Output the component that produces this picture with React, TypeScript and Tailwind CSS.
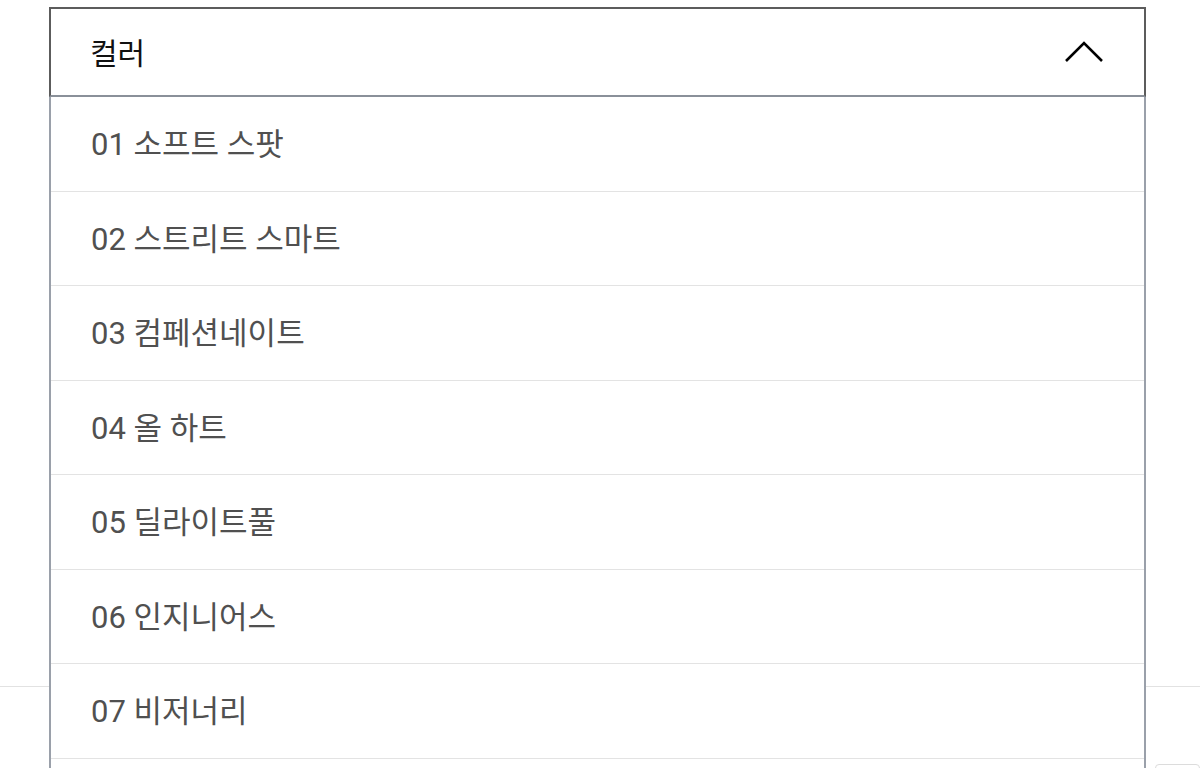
import { useState } from "react";

const colors = [
  "01 소프트 스팟",
  "02 스트리트 스마트",
  "03 컴페션네이트",
  "04 올 하트",
  "05 딜라이트풀",
  "06 인지니어스",
  "07 비저너리",
];

const font = { fontFamily: "Roboto, 'Noto Sans CJK KR', sans-serif" };

export default function App() {
  const [open, setOpen] = useState(true);

  return (
    <div className="relative h-[768px] w-[1200px] overflow-hidden bg-white" style={font}>
      {/* page content under the dropdown */}
      <div className="h-[687px] border-b border-[#e2e2e2]" />
      <div className="flex justify-end pt-[77px]">
        <div className="h-[20px] w-[45px] rounded-sm border border-[#dcdcdc]" />
      </div>

      <div className="absolute left-[49px] top-[7px] w-[1097px]">
        <button
          type="button"
          onClick={() => setOpen(!open)}
          className="flex h-[90px] w-full items-center justify-between border-2 border-[#5c5c5c] border-b-[#8a9099] bg-white pt-[2px] pl-[39px] pr-[40px] text-left"
        >
          <span className="text-[30px] text-[#111]">컬러</span>
          <svg width="40" height="24" viewBox="0 0 40 24" fill="none" className={open ? "-mt-[2px]" : "-mt-[2px] rotate-180"}>
            <polyline points="2,21 20,3 38,21" stroke="#000" strokeWidth="2.6" />
          </svg>
        </button>
        {open ? (
          <ul className="border-x-2 border-[#9aa0aa] bg-white pb-[40px]">
            {colors.map((c) => (
              <li
                key={c}
                className="flex h-[94.5px] items-center border-b border-[#e3e3e3] pt-[3px] pl-[40px] text-[31px] text-[#505050]"
              >
                {c}
              </li>
            ))}
          </ul>
        ) : null}
      </div>
    </div>
  );
}
